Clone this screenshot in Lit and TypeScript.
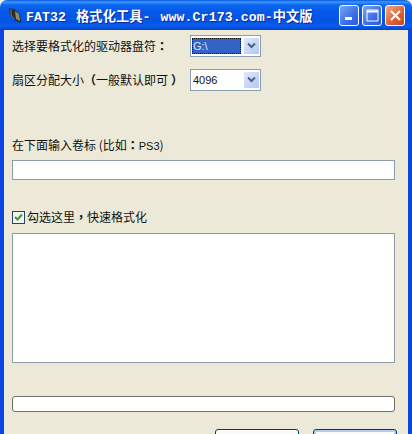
import {LitElement, html, css} from 'lit';
import {customElement} from 'lit/decorators.js';

const chevron = html`<svg width="9" height="7" viewBox="0 0 9 7"><path d="M1 1.5l3.5 3.5L8 1.5" fill="none" stroke="#4d6185" stroke-width="2"/></svg>`;

@customElement('app-root')
export class AppRoot extends LitElement {
  static styles = css`
    :host {
      display: block;
      width: 412px;
      height: 434px;
      overflow: hidden;
      font-family: 'Noto Sans CJK SC', sans-serif;
      font-size: 12px;
      color: #111;
    }
    .window {
      height: 434px;
      display: flex;
      flex-direction: column;
      background: #f2efe6;
      overflow: hidden;
    }
    .titlebar {
      height: 30px;
      flex: none;
      display: flex;
      align-items: center;
      padding: 0 7px 0 9px;
      border-radius: 7px 7px 0 0;
      background: linear-gradient(180deg, #0a58dd 0, #3d95ff 2px, #0a66ee 5px, #0558e8 12px, #0454e4 22px, #0a5ef0 26px, #0342c4 30px);
    }
    .app-icon { flex: none; margin-right: 5px; }
    .title {
      flex: 1;
      color: #fff;
      font-family: 'Liberation Mono', 'Noto Sans CJK SC', monospace;
      font-weight: 700;
      font-size: 13.2px;
      letter-spacing: 0.1px;
      word-spacing: 2px;
      white-space: pre;
      text-shadow: 1px 1px 0 #0a2a9a;
    }
    .ctl {
      width: 20px;
      height: 21px;
      box-sizing: border-box;
      margin-left: 3px;
      border: 1px solid #fff;
      border-radius: 3px;
      background: linear-gradient(135deg, #7ba3f2, #3a6fe6 60%, #2a5ad8);
      display: flex;
      align-items: center;
      justify-content: center;
    }
    .ctl.close { background: linear-gradient(135deg, #eeaa8c, #dd5f36 60%, #c9431c); }
    .body {
      flex: 1;
      min-height: 0;
      padding: 5px 13px 0 8px;
      display: flex;
      flex-direction: column;
      background: #ece9d8;
      border-left: 4px solid #0b45e2;
      border-right: 4px solid #0b45e2;
    }
    .row {
      display: flex;
      align-items: center;
      height: 21px;
    }
    .row label { width: 178px; flex: none; white-space: nowrap; }
    .row + .row { margin-top: 13px; }
    .open { font-weight: 700; }
    .shut { font-weight: 700; margin-left: 3px; }
    .punct { font-family: 'Noto Sans CJK TC', sans-serif; font-weight: 700; }
    .latin { font-family: 'Liberation Sans', sans-serif; font-size: 11px; }
    .combo {
      width: 71px;
      height: 22px;
      flex: none;
      box-sizing: border-box;
      border: 1px solid #8a9fb0;
      background: #fff;
      padding: 2px 1px;
      display: flex;
      gap: 3px;
      font-family: 'Liberation Sans', sans-serif;
      font-size: 11px;
      line-height: 16px;
    }
    .value { flex: 1; padding-left: 1px; }
    .value.sel {
      background: #3164c4;
      color: #dfe8f8;
      outline: 1px dotted #111;
      outline-offset: -1px;
    }
    .drop {
      width: 15px;
      flex: none;
      display: flex;
      align-items: center;
      justify-content: center;
      background: linear-gradient(135deg, #dfe8fb, #b3c8f3);
    }
    .hint { margin-top: 46px; line-height: 18px; height: 18px; }
    .field {
      height: 20px;
      flex: none;
      box-sizing: border-box;
      margin-top: 6px;
      border: 1px solid #8c9ca6;
      background: #fff;
    }
    .check {
      margin-top: 30px;
      height: 14px;
      display: flex;
      align-items: flex-start;
      gap: 2px;
      line-height: 13px;
    }
    .box {
      width: 13px;
      height: 13px;
      margin-top: 1px;
      box-sizing: border-box;
      border: 1px solid #24485f;
      background: #f4f4ee;
      display: flex;
      align-items: center;
      justify-content: center;
    }
    .area {
      height: 130px;
      flex: none;
      box-sizing: border-box;
      margin-top: 9px;
      border: 1px solid #8c9ca6;
      background: #fff;
    }
    .progress {
      height: 16px;
      flex: none;
      box-sizing: border-box;
      margin-top: 33px;
      border: 1px solid #6f6f68;
      border-radius: 3px;
      background: #fff;
    }
    .buttons {
      display: flex;
      justify-content: flex-end;
      gap: 14px;
      margin: 17px -2px 0 0;
    }
    .btn {
      width: 84px;
      height: 23px;
      flex: none;
      box-sizing: border-box;
      border: 1px solid #003c74;
      border-radius: 3px;
      background: #fbfbf7;
    }
    .btn.default { box-shadow: inset 0 0 0 2px #b5cdf0; }
  `;

  render() {
    return html`
      <div class="window">
        <div class="titlebar">
          <svg class="app-icon" width="12" height="15" viewBox="0 0 12 15">
            <path d="M0 0l5 1 6 5 1 9-5-2-6-6z" fill="#2b2b30"/>
            <path d="M6 3l4 3 1 7-4-2z" fill="#8f8d68"/>
            <path d="M2 1v6l3 4" fill="none" stroke="#6f7a98"/>
          </svg>
          <div class="title">FAT32 格式化工具- www.Cr173.com-中文版</div>
          <div class="ctl">
            <svg width="11" height="11" viewBox="0 0 11 11"><rect x="1" y="7" width="7" height="3" fill="#fff"/></svg>
          </div>
          <div class="ctl">
            <svg width="13" height="13" viewBox="0 0 13 13"><path d="M1 1h11v11H1z" fill="none" stroke="#fff"/><path d="M1 2.5h11" stroke="#fff" stroke-width="2"/></svg>
          </div>
          <div class="ctl close">
            <svg width="13" height="13" viewBox="0 0 13 13"><path d="M2 2l9 9M11 2l-9 9" stroke="#fff" stroke-width="2"/></svg>
          </div>
        </div>
        <div class="body">
          <div class="row">
            <label>选择要格式化的驱动器盘符<span class="punct">：</span></label>
            <div class="combo"><span class="value sel">G:\\</span><span class="drop">${chevron}</span></div>
          </div>
          <div class="row">
            <label>扇区分配大小<span class="open">（</span>一般默认即可<span class="shut">）</span></label>
            <div class="combo"><span class="value">4096</span><span class="drop">${chevron}</span></div>
          </div>
          <div class="hint">在下面输入卷标 (比如<span class="punct">：</span><span class="latin">PS3</span>)</div>
          <div class="field"></div>
          <div class="check">
            <span class="box"><svg width="9" height="9" viewBox="0 0 9 9"><path d="M1 4l2.5 2.5L8 1.5" fill="none" stroke="#3f9a3a" stroke-width="2"/></svg></span>
            <span>勾选这里<span class="punct">，</span>快速格式化</span>
          </div>
          <div class="area"></div>
          <div class="progress"></div>
          <div class="buttons">
            <div class="btn"></div>
            <div class="btn default"></div>
          </div>
        </div>
      </div>
    `;
  }
}
